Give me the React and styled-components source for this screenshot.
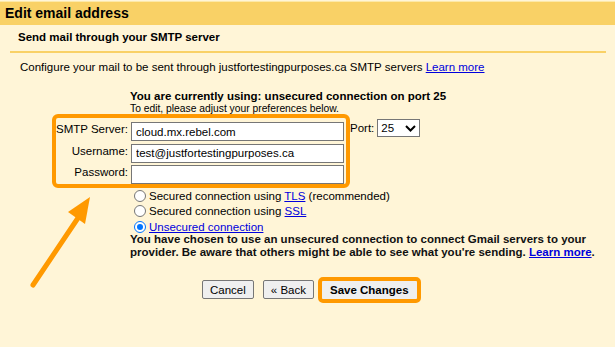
import React from "react";
import styled, { createGlobalStyle } from "styled-components";

const Global = createGlobalStyle`
    html, body {
        margin: 0;
        padding: 0;
        background: #fff5d7;
    }
    body {
        font-family: "Liberation Sans", Arial, sans-serif;
        color: #000;
    }
`;

const Page = styled.div`
    position: relative;
    width: 615px;
    height: 347px;
    background: #fff5d7;
    overflow: hidden;
    font-size: 11.5px;
`;

const TitleBar = styled.div`
    height: 23px;
    margin-top: 1px;
    background: #f9d166;
    border-top: 1px solid #fde9a8;
    padding-left: 5px;
    font-size: 14px;
    font-weight: bold;
    line-height: 23px;
`;

const SectionHead = styled.div`
    margin: 0 9px 0 10px;
    padding: 6px 0 0 8px;
    height: 20px;
    border-bottom: 2px solid #f9d166;
    font-weight: bold;
`;

const Intro = styled.p`
    margin: 8px 0 0 20px;
`;

const Link = styled.a`
    color: #0000dd;
    text-decoration: underline;
    cursor: pointer;
`;

const Current = styled.div`
    margin: 16px 0 0 130px;
    font-weight: bold;
    line-height: 14px;
`;

const Hint = styled.div`
    margin-left: 130px;
    font-size: 10.3px;
    line-height: 11px;
`;

const FormRow = styled.div`
    display: flex;
    align-items: flex-start;
    margin: 0 0 0 52px;
`;

const Highlight = styled.div`
    display: grid;
    grid-template-columns: 72px 213px;
    column-gap: 3px;
    row-gap: 2.5px;
    padding: 4px 2px 0 0;
    border: 4px solid #ff9900;
    border-radius: 6px;
`;

const Label = styled.label`
    text-align: right;
    line-height: 15px;
    white-space: nowrap;
`;

const Input = styled.input`
    box-sizing: border-box;
    height: 19px;
    width: 213px;
    border: 1px solid #767676;
    background: #fff;
    padding: 0 4px;
    font-family: "Liberation Sans", Arial, sans-serif;
    font-size: 11.5px;
    color: #000;
    outline: none;
`;

const PortWrap = styled.div`
    display: flex;
    align-items: center;
    gap: 3px;
    margin: 5px 0 0 0;
`;

const Select = styled.div`
    box-sizing: border-box;
    display: flex;
    align-items: center;
    justify-content: space-between;
    width: 43px;
    height: 18px;
    padding: 0 3px;
    border: 1px solid #767676;
    background: #fff;
`;

const Options = styled.div`
    display: flex;
    flex-direction: column;
    margin: 0 0 0 134px;
`;

const Option = styled.label`
    display: flex;
    align-items: center;
    gap: 3px;
    height: 15.5px;
`;

const Radio = styled.span`
    box-sizing: border-box;
    width: 12px;
    height: 12px;
    border-radius: 50%;
    border: 1px solid ${(p) => (p.$on ? "#0075ff" : "#767676")};
    background: #fff;
    display: flex;
    align-items: center;
    justify-content: center;

    &::after {
        content: "";
        width: 6px;
        height: 6px;
        border-radius: 50%;
        background: ${(p) => (p.$on ? "#0075ff" : "transparent")};
    }
`;

const Warning = styled.p`
    margin: -2px 0 0 130px;
    width: 470px;
    font-weight: bold;
    line-height: 13px;
    color: #111;
`;

const Buttons = styled.div`
    display: flex;
    align-items: center;
    gap: 9px;
    margin: 18px 0 0 202px;
`;

const Button = styled.button`
    box-sizing: border-box;
    height: 19px;
    padding: 0 7px;
    border: 1px solid #767676;
    border-radius: 2px;
    background: #efefef;
    font-family: "Liberation Sans", Arial, sans-serif;
    font-size: 11.5px;
    font-weight: ${(p) => (p.$primary ? "bold" : "normal")};
    color: #000;
`;

const SaveRing = styled.div`
    border: 4px solid #ff9900;
    border-radius: 5px;
    margin-left: -5px;
    display: flex;

    ${Button} {
        border-color: #efefef;
        height: 18px;
    }
`;

const Arrow = styled.svg`
    position: absolute;
    left: 28px;
    top: 193px;
`;

export default function App() {
    return (
        <Page>
            <Global />
            <TitleBar>Edit email address</TitleBar>
            <SectionHead>Send mail through your SMTP server</SectionHead>
            <Intro>
                Configure your mail to be sent through justfortestingpurposes.ca SMTP servers{" "}
                <Link>Learn more</Link>
            </Intro>
            <Current>You are currently using: unsecured connection on port 25</Current>
            <Hint>To edit, please adjust your preferences below.</Hint>
            <FormRow>
                <Highlight>
                    <Label>SMTP Server:</Label>
                    <Input defaultValue="cloud.mx.rebel.com" />
                    <Label>Username:</Label>
                    <Input defaultValue="test@justfortestingpurposes.ca" />
                    <Label>Password:</Label>
                    <Input type="password" />
                </Highlight>
                <PortWrap>
                    Port:
                    <Select>
                        25
                        <svg width="11" height="7" viewBox="0 0 11 7">
                            <path d="M1 1l4.5 4.5L10 1" fill="none" stroke="#000" strokeWidth="2" />
                        </svg>
                    </Select>
                </PortWrap>
            </FormRow>
            <Options>
                <Option>
                    <Radio />
                    <span>
                        Secured connection using <Link>TLS</Link> (recommended)
                    </span>
                </Option>
                <Option>
                    <Radio />
                    <span>
                        Secured connection using <Link>SSL</Link>
                    </span>
                </Option>
                <Option>
                    <Radio $on />
                    <Link>Unsecured connection</Link>
                </Option>
            </Options>
            <Warning>
                You have chosen to use an unsecured connection to connect Gmail servers to your
                provider. Be aware that others might be able to see what you're sending.{" "}
                <Link>Learn more</Link>.
            </Warning>
            <Buttons>
                <Button>Cancel</Button>
                <Button>« Back</Button>
                <SaveRing>
                    <Button $primary>Save Changes</Button>
                </SaveRing>
            </Buttons>
            <Arrow width="70" height="100" viewBox="0 0 70 100">
                <path d="M5 92L52 22" stroke="#ff9900" strokeWidth="5" strokeLinecap="round" />
                <path d="M62 4L40 19L57 31Z" fill="#ff9900" />
            </Arrow>
        </Page>
    );
}
